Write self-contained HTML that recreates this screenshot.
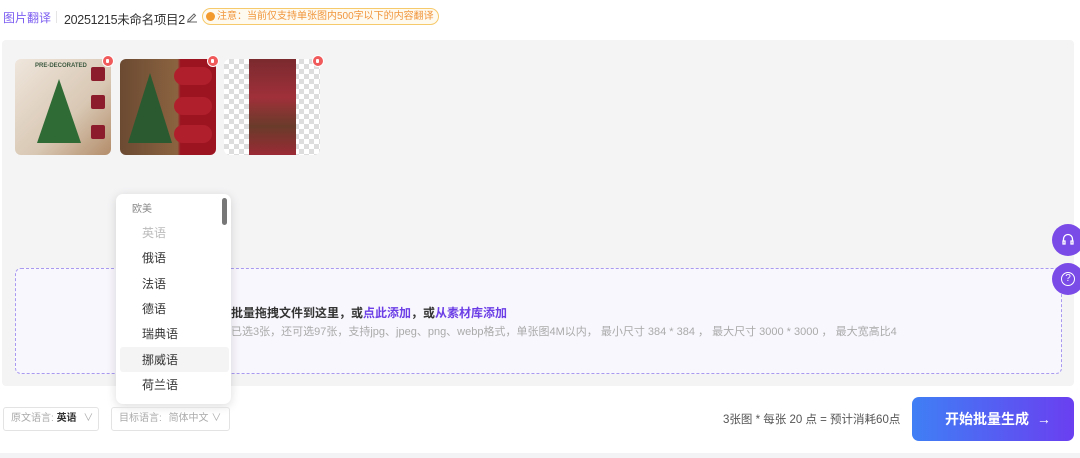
<!DOCTYPE html><html><head><meta charset="utf-8"><style>
*{margin:0;padding:0;box-sizing:border-box}
body{width:1080px;height:458px;background:#fff;font-family:"Liberation Sans","Noto Sans CJK SC",sans-serif;position:relative;overflow:hidden;color:#333}
.a{position:absolute}
.th{position:absolute;top:59px;width:96px;height:96px;border-radius:6px;overflow:hidden}
.del{position:absolute;top:55px;width:12px;height:12px;border-radius:50%;background:#f05a5a;border:1.5px solid #fff}
.del:after{content:"";position:absolute;left:3px;top:2.5px;width:3px;height:4px;background:#fff;border-radius:1px}
.it{position:absolute;left:26px;font-size:12px;color:#333}
.sel{position:absolute;top:407px;height:24px;border:1px solid #e3e3e3;border-radius:3px;font-size:10px;color:#aaa;line-height:22px;padding-left:7px}
</style></head><body>
<div class="a" style="left:3px;top:9px;font-size:12px;color:#7b5cf0">图片翻译</div>
<div class="a" style="left:56px;top:11px;width:1px;height:12px;background:#e5e5e5"></div>
<div class="a" style="left:64px;top:9px;font-size:12.5px;color:#333;letter-spacing:-0.3px">20251215未命名项目2</div>
<svg class="a" style="left:186px;top:11px" width="12" height="12" viewBox="0 0 12 12"><path d="M2 9L8 3l1.5 1.5-6 6H2z M1 11h10" stroke="#666" fill="none" stroke-width="1"/></svg>
<div class="a" style="left:202px;top:8px;width:237px;height:17px;border:1px solid #f6c96a;border-radius:9px;background:#fffaf0;font-size:10px;color:#f0963c;line-height:15px;padding-left:14px">注意：当前仅支持单张图内500字以下的内容翻译</div>
<div class="a" style="left:206px;top:12px;width:9px;height:9px;border-radius:50%;background:#f39a2e"></div>
<div class="a" style="left:2px;top:40px;width:1072px;height:346px;background:#f4f4f5;border-radius:4px"></div>
<div class="th" style="left:15px;background:linear-gradient(135deg,#efe6dc,#d8c7b3 60%,#b38d6a)"><div class="a" style="left:22px;top:20px;width:44px;height:64px;background:#2f6b35;clip-path:polygon(50% 0,100% 100%,0 100%)"></div><div class="a" style="left:76px;top:8px;width:14px;height:14px;background:#8c1c2c;border-radius:2px"></div><div class="a" style="left:76px;top:36px;width:14px;height:14px;background:#8c1c2c;border-radius:2px"></div><div class="a" style="left:76px;top:66px;width:14px;height:14px;background:#8c1c2c;border-radius:2px"></div><div class="a" style="left:20px;top:4px;font-size:6px;font-weight:bold;color:#3d5a40">PRE-DECORATED</div></div>
<div class="th" style="left:120px;background:linear-gradient(90deg,#6b4a32,#8b6340 60%,#9c1420 63%,#9c1420)"><div class="a" style="left:8px;top:14px;width:44px;height:70px;background:#2b5a30;clip-path:polygon(50% 0,100% 100%,0 100%)"></div><div class="a" style="left:54px;top:8px;width:38px;height:18px;background:#b0202c;border-radius:9px"></div><div class="a" style="left:54px;top:38px;width:38px;height:18px;background:#b0202c;border-radius:9px"></div><div class="a" style="left:54px;top:66px;width:38px;height:18px;background:#b0202c;border-radius:9px"></div></div>
<div class="th" style="left:224px;background:repeating-conic-gradient(#ddd 0 25%,#fff 0 50%) 0 0/10px 10px"><div class="a" style="left:25px;top:0;width:47px;height:96px;background:linear-gradient(180deg,#7a2a2e,#a0303a 40%,#6a3b2a 70%,#9a2a35)"></div></div>
<div class="del" style="left:102px"></div><div class="del" style="left:207px"></div><div class="del" style="left:312px"></div>
<div class="a" style="left:15px;top:268px;width:1047px;height:106px;border:1px dashed #a99af0;border-radius:6px;background:#f8f7fd"></div>
<div class="a" style="left:231px;top:304px;font-size:12px;font-weight:bold;color:#333">批量拖拽文件到这里，或<span style="color:#6c3fe6">点此添加</span>，或<span style="color:#6c3fe6">从素材库添加</span></div>
<div class="a" style="left:231px;top:323px;font-size:11px;color:#aaa">已选3张，还可选97张，支持jpg、jpeg、png、webp格式，单张图4M以内， 最小尺寸 384 * 384 ， 最大尺寸 3000 * 3000 ， 最大宽高比4</div>
<div class="a" style="left:116px;top:194px;width:115px;height:210px;background:#fff;border-radius:7px;box-shadow:0 2px 10px rgba(0,0,0,.14)">
<div class="a" style="left:106px;top:4px;width:5px;height:27px;background:#777;border-radius:3px"></div>
<div class="a" style="left:16px;top:6px;font-size:10px;color:#888">欧美</div>
<div class="it" style="top:30px;color:#bbb">英语</div>
<div class="it" style="top:55px">俄语</div>
<div class="it" style="top:81px">法语</div>
<div class="it" style="top:106px">德语</div>
<div class="it" style="top:131px">瑞典语</div>
<div class="a" style="left:4px;top:153px;width:109px;height:25px;background:#f4f4f5;border-radius:3px"></div>
<div class="it" style="top:157px">挪威语</div>
<div class="it" style="top:182px">荷兰语</div>
</div>
<div class="sel" style="left:3px;width:96px">原文语言: <span style="color:#333;font-weight:bold">英语</span> <span style="margin-left:4px">∨</span></div>
<div class="sel" style="left:111px;width:119px">目标语言: <span style="margin-left:4px">简体中文</span> <span>∨</span></div>
<div class="a" style="left:723px;top:411px;font-size:11.5px;color:#555">3张图 * 每张 20 点 = 预计消耗60点</div>
<div class="a" style="left:912px;top:397px;width:162px;height:44px;border-radius:7px;background:linear-gradient(90deg,#3f7ff5,#6a3ff0);color:#fff;font-size:14px;font-weight:bold;line-height:44px;padding-left:33px">开始批量生成 <span style="font-weight:normal;margin-left:4px">→</span></div>
<div class="a" style="left:1052px;top:224px;width:32px;height:32px;border-radius:50%;background:#7b4be8"></div>
<div class="a" style="left:1052px;top:263px;width:32px;height:32px;border-radius:50%;background:#7b4be8"></div>
<svg class="a" style="left:1062px;top:233px" width="12" height="14" viewBox="0 0 12 14"><path d="M1.5 8V6a4.5 4.5 0 019 0v2M1 8h2v3H1zM9 8h2v3H9z" stroke="#fff" fill="none" stroke-width="1.3"/></svg>
<div class="a" style="left:1061px;top:272px;width:14px;height:14px;border:1.4px solid #fff;border-radius:50%;color:#fff;font-size:10px;text-align:center;line-height:12px">?</div>
<div class="a" style="left:0;top:453px;width:1080px;height:5px;background:#f3f3f5"></div>
</body></html>
